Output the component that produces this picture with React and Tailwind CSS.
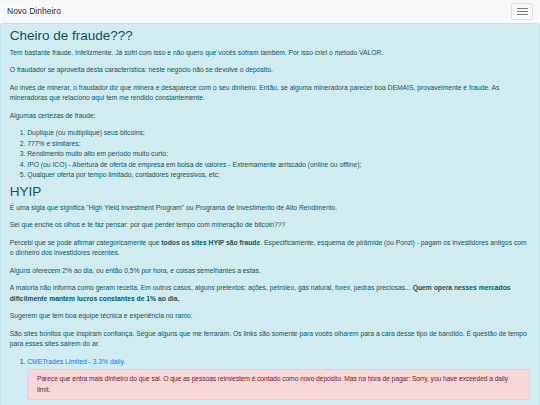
export default function App() {
  return (
    <div className="min-h-[405px] bg-white font-['Liberation_Sans',Arial,sans-serif] text-[6.75px] leading-[10.5px] text-[#212529]">
      <nav className="flex h-[23px] items-center justify-between bg-[#f8f9fa] px-[7px]">
        <span className="text-[8.5px] leading-none text-black/90">Novo Dinheiro</span>
        <button className="flex h-[17px] w-[22px] items-center justify-center rounded-[2px] border border-black/10">
          <svg width="11" height="9" viewBox="0 0 11 9">
            <path d="M0 1.5h11M0 4.5h11M0 7.5h11" stroke="rgba(0,0,0,0.5)" strokeWidth="1" />
          </svg>
        </button>
      </nav>
      <div className="rounded-[2px] border border-[#bee5eb] bg-[#d1ecf1] px-[8.75px] pb-[5px] pt-[4px] text-[#0c5460]">
        <h2 className="mb-[3.5px] text-[13.5px] font-medium leading-[1.2]">Cheiro de fraude???</h2>
        <p className="mb-[7px]">Tem bastante fraude. Infelizmente. Já sofri com isso e não quero que vocês sofram também. Por isso criei o método VALOR.</p>
        <p className="mb-[7px]">O fraudador se aproveita desta característica: neste negócio não se devolve o depósito.</p>
        <p className="mb-[7px]">Ao invés de minerar, o fraudador diz que minera e desaparece com o seu dinheiro. Então, se alguma mineradora parecer boa DEMAIS, provavelmente é fraude. As mineradoras que relaciono aqui tem me rendido constantemente.</p>
        <p className="mb-[7px]">Algumas certezas de fraude:</p>
        <ol className="mb-[3px] list-decimal pl-[17.5px]">
          <li>Duplique (ou multiplique) seus bitcoins;</li>
          <li>777% e similares;</li>
          <li>Rendimento muito alto em período muito curto;</li>
          <li>IPO (ou ICO) - Abertura de oferta de empresa em bolsa de valores - Extremamente arriscado (online ou offline);</li>
          <li>Qualquer oferta por tempo limitado, contadores regressivos, etc;</li>
        </ol>
        <h2 className="mb-[3px] text-[13.5px] font-medium leading-[1.2]">HYIP</h2>
        <p className="mb-[7px]">É uma sigla que significa "High Yield Investment Program" ou Programa de Investimento de Alto Rendimento.</p>
        <p className="mb-[7px]">Sei que enche os olhos e te faz pensar: por que perder tempo com mineração de bitcoin???</p>
        <p className="mb-[7px]">Percebi que se pode afirmar categoricamente que <b>todos os sites HYIP são fraude</b>. Especificamente, esquema de pirâmide (ou Ponzi) - pagam os investidores antigos com o dinheiro dos investidores recentes.</p>
        <p className="mb-[7px]">Alguns oferecem 2% ao dia, ou então 0,5% por hora, e coisas semelhantes a estas.</p>
        <p className="mb-[7px]">A maioria não informa como geram receita. Em outros casos, alguns pretextos: ações, petróleo, gás natural, forex, pedras preciosas... <b>Quem opera nesses mercados dificilmente mantem lucros constantes de 1% ao dia.</b></p>
        <p className="mb-[7px]">Sugerem que tem boa equipe técnica e experiência no ramo.</p>
        <p className="mb-[7px]">São sites bonitos que inspiram confiança. Segue alguns que me ferraram. Os links são somente para vocês olharem para a cara desse tipo de bandido. É questão de tempo para esses sites sairem do ar.</p>
        <ol className="list-decimal pl-[17.5px]">
          <li>
            <a className="text-[#007bff]">CMETrades Limited - 3.3% daily.</a>
            <div className="mb-[3px] mt-[2px] rounded-[2px] border border-[#f5c6cb] bg-[#f8d7da] px-[8.75px] py-[4px] tracking-[-0.1px] text-[#721c24]">
              Parece que entra mais dinheiro do que sai. O que as pessoas reinvestem é contado como novo depósito. Mas na hora de pagar: Sorry, you have exceeded a daily limit.
            </div>
          </li>
          <li>
            <a className="text-[#007bff]">BTC First.</a>
          </li>
        </ol>
      </div>
    </div>
  );
}
